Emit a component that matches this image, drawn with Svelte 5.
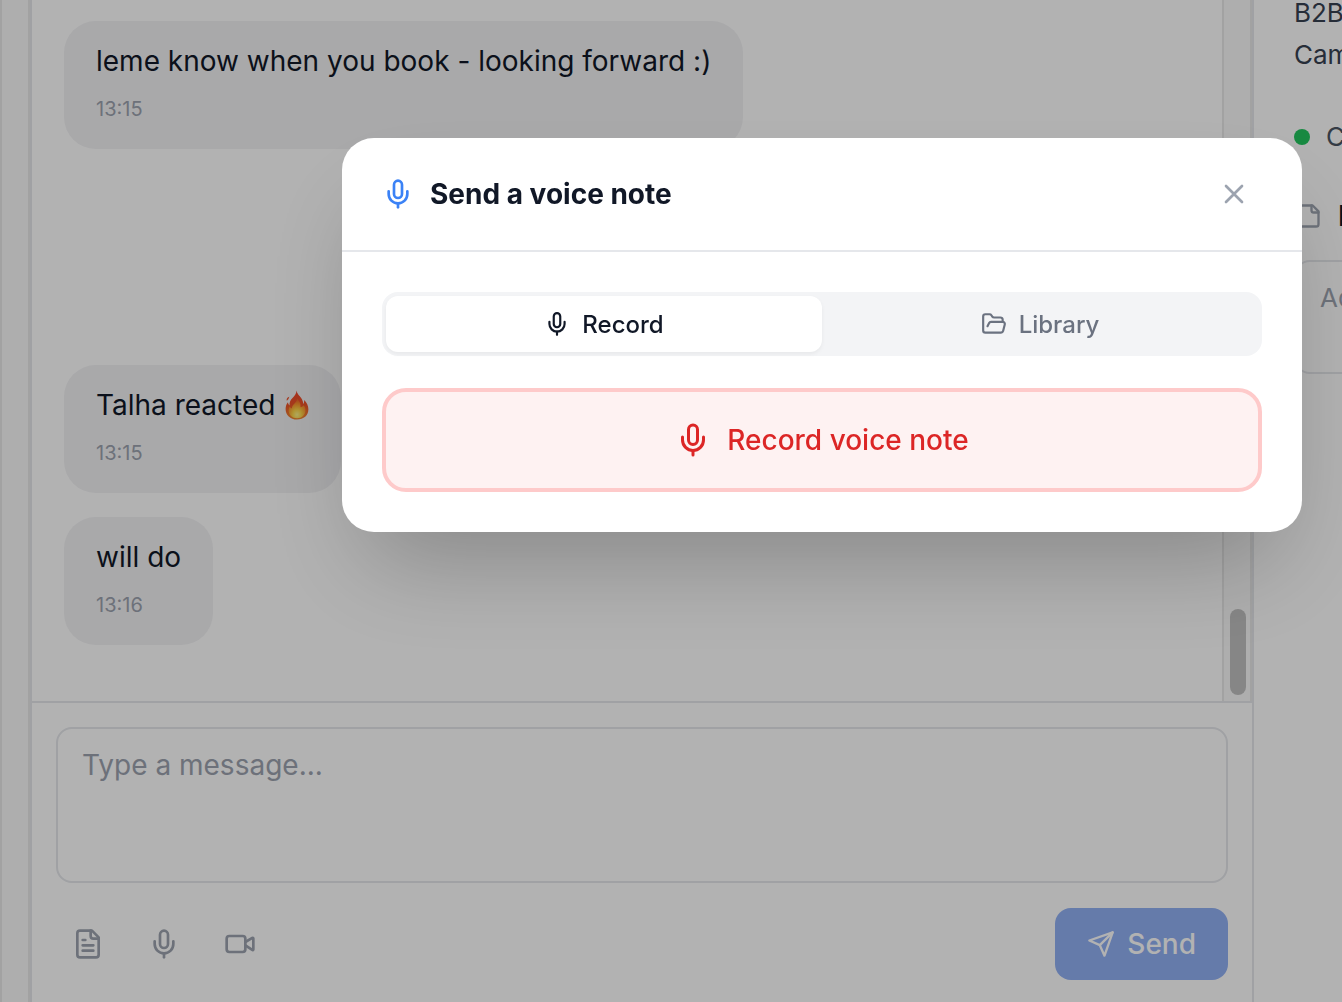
<script>
  let tab = $state('record');
  let draft = $state('');
  let note = $state('');
  let open = $state(true);

  const messages = [
    { text: 'leme know when you book - looking forward :)', time: '13:15' },
    { text: 'Talha reacted', fire: true, time: '13:15', later: true },
    { text: 'will do', time: '13:16' },
  ];
</script>

{#snippet mic()}
  <svg class="icon" viewBox="0 0 24 24" aria-hidden="true">
    <path d="M12 19v3" />
    <path d="M19 10v2a7 7 0 0 1-14 0v-2" />
    <rect x="9" y="2" width="6" height="13" rx="3" />
  </svg>
{/snippet}

{#snippet fire()}
  <svg class="fire" viewBox="0 0 24 30" role="img" aria-label="fire">
    <defs>
      <linearGradient id="flame" x1="0" y1="0" x2="0" y2="1">
        <stop offset="0" stop-color="#f0452a" />
        <stop offset="0.5" stop-color="#ee5428" />
        <stop offset="1" stop-color="#f08a30" />
      </linearGradient>
      <radialGradient id="glow" cx="0.5" cy="0.82" r="0.75">
        <stop offset="0" stop-color="#fff58a" />
        <stop offset="0.35" stop-color="#ffd648" />
        <stop offset="0.75" stop-color="#fb932c" />
        <stop offset="1" stop-color="#f26a2a" />
      </radialGradient>
    </defs>
    <path
      fill="url(#flame)"
      d="M11.500 0.500c.5 2.500 1.500 3.800 3.300 5.800 2 2.200 3.200 4.400 3.500 7.700.7-.9 1-2.200.8-4 2.700 2.700 4.300 5.600 4.300 9.300 0 6-4.600 10.300-11.400 10.300S.6 25 .6 19c0-3 1-5 2.400-6.700.1 1.400.6 2.500 1.500 3.200-.1-3.500.9-5.300 3-7.400C9.900 5.700 11.300 3.700 11.500.5z"
    />
    <path fill="#ee5530" d="M1.800 10.800c-.6-2 .5-3.500 2.600-4-.9 1.500-.6 2.900-2.600 4z" />
    <path
      fill="url(#glow)"
      d="M12.200 8.800c2.600 2.700 3.600 4.900 3.300 8.400 1.500-.2 2.500-.9 3.200-2 1.300 1.500 1.800 3.100 1.800 5 0 4.700-3.500 8-8.400 8s-8.500-3.200-8.500-7.700c0-1.500.4-2.800 1.100-3.900.5 1 1.200 1.600 2.200 1.800.1-4 4.500-5 5.300-9.600z"
    />
  </svg>
{/snippet}

<div class="page" inert={open}>
  <div class="track"></div>

  <main class="chat">
    <div class="history">
      <div class="messages">
        {#each messages as message}
          <div class="bubble" class:later={message.later}>
            <p class="text">
              {message.text}
              {#if message.fire}{@render fire()}{/if}
            </p>
            <time class="time">{message.time}</time>
          </div>
        {/each}
      </div>
      <div class="track"><div class="thumb"></div></div>
    </div>

    <form class="composer" onsubmit={(e) => e.preventDefault()}>
      <textarea
        class="draft"
        aria-label="Message"
        placeholder="Type a message..."
        bind:value={draft}
      ></textarea>
      <div class="toolbar">
        <button class="tool" type="button" aria-label="Templates">
          <svg class="icon" viewBox="0 0 24 24" aria-hidden="true">
            <path d="M15 2H6a2 2 0 0 0-2 2v16a2 2 0 0 0 2 2h12a2 2 0 0 0 2-2V7Z" />
            <path d="M14 2v4a2 2 0 0 0 2 2h4" />
            <path d="M10 9H8M16 13H8M16 17H8" />
          </svg>
        </button>
        <button class="tool" type="button" aria-label="Voice note" onclick={() => (open = true)}>
          {@render mic()}
        </button>
        <button class="tool" type="button" aria-label="Video">
          <svg class="icon" viewBox="0 0 24 24" aria-hidden="true">
            <path d="m16 13 5.223 3.482a.5.5 0 0 0 .777-.416V7.870a.5.5 0 0 0-.752-.432L16 10.500" />
            <rect x="2" y="6" width="14" height="12" rx="2" />
          </svg>
        </button>
        <button class="send" type="submit">
          <svg class="icon" viewBox="0 0 24 24" aria-hidden="true">
            <path d="m22 2-7 20-4-9-9-4Z" />
            <path d="M22 2 11 13" />
          </svg>
          Send
        </button>
      </div>
    </form>
  </main>

  <aside class="details">
    <p class="campaign">B2B<br />Campaign</p>
    <p class="status"><span class="dot"></span>Connected</p>
    <label class="notes-title" for="notes">
      <svg class="icon" viewBox="0 0 24 24" aria-hidden="true">
        <path d="M16 3H5a2 2 0 0 0-2 2v14a2 2 0 0 0 2 2h14a2 2 0 0 0 2-2V8Z" />
        <path d="M15 3v4a2 2 0 0 0 2 2h4" />
      </svg>
      Notes
    </label>
    <textarea id="notes" class="notes" placeholder="Add a note" bind:value={note}></textarea>
  </aside>
</div>

{#if open}
  <div class="overlay">
    <div class="modal" role="dialog" aria-modal="true" aria-labelledby="voice-title">
      <header class="modal-header">
        {@render mic()}
        <h2 id="voice-title">Send a voice note</h2>
        <button class="close" type="button" aria-label="Close" onclick={() => (open = false)}>
          <svg class="icon" viewBox="0 0 24 24" aria-hidden="true">
            <path d="M18 6 6 18M6 6l12 12" />
          </svg>
        </button>
      </header>
      <div class="modal-body">
        <div class="tabs">
          <button
            class="tab"
            class:active={tab === 'record'}
            type="button"
            onclick={() => (tab = 'record')}
          >
            {@render mic()}
            Record
          </button>
          <button
            class="tab"
            class:active={tab === 'library'}
            type="button"
            onclick={() => (tab = 'library')}
          >
            <svg class="icon" viewBox="0 0 24 24" aria-hidden="true">
              <path
                d="m6 14 1.500-2.900A2 2 0 0 1 9.240 10H20a2 2 0 0 1 1.940 2.500l-1.540 6a2 2 0 0 1-1.950 1.500H4a2 2 0 0 1-2-2V5a2 2 0 0 1 2-2h3.900a2 2 0 0 1 1.690.9l.81 1.200a2 2 0 0 0 1.670.9H18a2 2 0 0 1 2 2v2"
              />
            </svg>
            Library
          </button>
        </div>
        <button class="record" type="button">
          {@render mic()}
          Record voice note
        </button>
      </div>
    </div>
  </div>
{/if}

<style>
  :global(body) {
    font-family: Inter, "Liberation Sans", sans-serif;
    font-optical-sizing: none;
    background: #fff;
    color: #111827;
    overflow: hidden;
  }

  button,
  textarea {
    font: inherit;
    box-sizing: border-box;
    margin: 0;
  }

  button {
    display: flex;
    align-items: center;
    justify-content: center;
    border: 0;
    background: none;
    cursor: pointer;
  }

  textarea {
    display: block;
    border: 2px solid #e5e7eb;
    border-radius: 16px;
    padding: 16px 24px;
    background: #fff;
    resize: none;
  }

  textarea::placeholder {
    color: #9ca3af;
  }

  p,
  h2 {
    margin: 0;
  }

  .icon {
    display: block;
    flex: none;
    width: 32px;
    height: 32px;
    fill: none;
    stroke: currentColor;
    stroke-width: 2;
    stroke-linecap: round;
    stroke-linejoin: round;
  }

  .page {
    display: flex;
    height: 100vh;
    overflow: hidden;
  }

  .track {
    display: flex;
    flex: none;
    flex-direction: column;
    justify-content: flex-end;
    box-sizing: border-box;
    width: 30px;
    padding: 6px;
    border: 2px solid #e8e8e8;
    border-width: 0 2px;
    background: #fafafa;
  }

  .thumb {
    width: 16px;
    height: 86px;
    border-radius: 8px;
    background: #c1c1c1;
  }

  .chat {
    display: flex;
    flex: 1;
    flex-direction: column;
    min-width: 0;
    border: 2px solid #e5e7eb;
    border-width: 0 2px;
  }

  .history {
    display: flex;
    flex: 1;
    min-height: 0;
  }

  .messages {
    display: flex;
    flex: 1;
    flex-direction: column;
    align-items: flex-start;
    justify-content: flex-end;
    gap: 24px;
    padding: 0 32px 56px;
    overflow: hidden;
  }

  .bubble {
    flex: none;
    padding: 20px 32px;
    border-radius: 32px;
    background: #f2f2f4;
  }

  .later {
    margin-top: 192px;
  }

  .text {
    display: flex;
    align-items: center;
    gap: 10px;
    margin-bottom: 8px;
    font-size: 28px;
    line-height: 40px;
  }

  .fire {
    width: 24px;
    height: 30px;
  }

  .time {
    display: block;
    color: #9ca3af;
    font-size: 20px;
    line-height: 40px;
  }

  .composer {
    padding: 24px 24px 22px;
    border-top: 2px solid #e5e7eb;
  }

  .draft {
    width: 100%;
    height: 156px;
    margin-bottom: 25px;
    font-size: 28px;
    line-height: 40px;
  }

  .toolbar {
    display: flex;
    align-items: center;
    gap: 12px;
  }

  .tool {
    width: 64px;
    height: 64px;
    padding: 0;
    color: #9ca3af;
  }

  .send {
    gap: 12px;
    height: 72px;
    margin-left: auto;
    padding: 0 32px;
    border-radius: 16px;
    background: #2563eb;
    color: #fff;
    font-size: 28px;
    font-weight: 500;
    opacity: 0.5;
  }

  .send .icon {
    width: 28px;
    height: 28px;
  }

  .details {
    flex: none;
    box-sizing: border-box;
    width: 88px;
    padding-left: 40px;
    overflow: hidden;
    white-space: nowrap;
    font-size: 26px;
    line-height: 42px;
    color: #4b5563;
  }

  .campaign {
    margin-top: -8px;
    color: #374151;
  }

  .status {
    display: flex;
    align-items: center;
    gap: 16px;
    margin-top: 40px;
  }

  .dot {
    flex: none;
    width: 16px;
    height: 16px;
    border-radius: 50%;
    background: #22c55e;
  }

  .notes-title {
    display: flex;
    align-items: center;
    gap: 16px;
    margin: 38px 0 24px;
    color: #111827;
    font-size: 28px;
    font-weight: 600;
    line-height: 40px;
  }

  .notes-title .icon {
    width: 28px;
    height: 28px;
    color: #9ca3af;
  }

  .notes {
    width: 400px;
    height: 114px;
    line-height: 40px;
  }

  .overlay {
    position: fixed;
    inset: 0;
    display: flex;
    align-items: flex-start;
    justify-content: flex-end;
    padding: 138px 40px 40px;
    background: rgba(0, 0, 0, 0.3);
  }

  .modal {
    width: 100%;
    max-width: 960px;
    border-radius: 32px;
    background: #fff;
    box-shadow: 0 50px 100px -24px rgba(0, 0, 0, 0.25);
  }

  .modal-header {
    display: flex;
    align-items: center;
    gap: 16px;
    padding: 28px 40px;
    border-bottom: 2px solid #e5e7eb;
    color: #3b82f6;
  }

  .modal-header h2 {
    color: #111827;
    font-size: 28px;
    font-weight: 700;
    line-height: 40px;
  }

  .close {
    margin-left: auto;
    padding: 12px;
    color: #9ca3af;
  }

  .modal-body {
    display: flex;
    flex-direction: column;
    gap: 32px;
    padding: 40px;
  }

  .tabs {
    display: flex;
    padding: 4px;
    border-radius: 16px;
    background: #f3f4f6;
  }

  .tab {
    flex: 1;
    gap: 12px;
    height: 56px;
    border-radius: 12px;
    color: #6b7280;
    font-size: 24px;
    font-weight: 500;
  }

  .tab .icon {
    width: 26px;
    height: 26px;
  }

  .tab.active {
    background: #fff;
    color: #111827;
    box-shadow: 0 2px 4px rgba(0, 0, 0, 0.05);
  }

  .record {
    gap: 16px;
    height: 104px;
    border: 4px solid #fecaca;
    border-radius: 24px;
    background: #fef2f2;
    color: #dc2626;
    font-size: 28px;
    font-weight: 500;
  }

  .record .icon {
    width: 36px;
    height: 36px;
  }
</style>
